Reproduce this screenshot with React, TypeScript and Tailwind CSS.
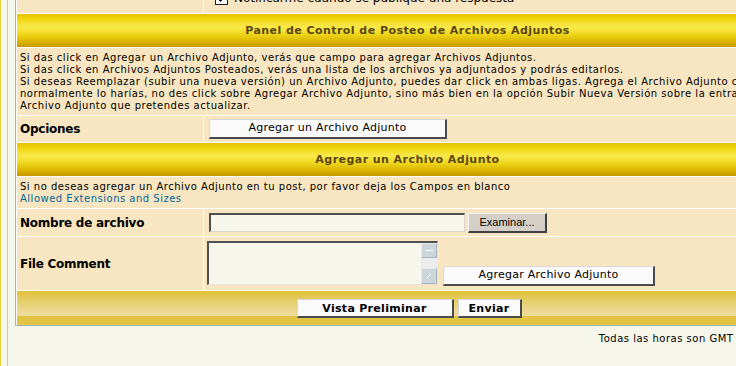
import React from 'react';

// fuente tipo Verdana para todo el panel
const verdana = "font-['DejaVu_Sans',Verdana,sans-serif]";

const headerBg =
  'bg-[linear-gradient(to_bottom,#e4c000_0%,#f0d40c_14%,#f8e84a_38%,#f6e236_50%,#ecd216_64%,#dcb602_82%,#c89800_100%)]';

const btnWhite =
  'bg-[#fafafa] border-t border-l border-t-[#d8d8d8] border-l-[#d8d8d8] border-r-2 border-b-2 border-r-[#4a4a4a] border-b-[#4a4a4a]';

const Header = ({ children }: { children: React.ReactNode }) => (
  <div
    className={`h-[33px] flex items-center justify-center pt-[2px] ${headerBg} text-[11px] font-bold text-[#5a4612] tracking-[0.45px]`}
  >
    {children}
  </div>
);

const Label = ({ children }: { children: React.ReactNode }) => (
  <div className="bg-[#f7e6c1] flex items-center pl-[3px] text-[12px] font-bold tracking-[-0.25px] text-black">
    {children}
  </div>
);

export default function App() {
  return (
    <div className={`w-[736px] h-[366px] overflow-hidden bg-[#f6f6ea] ${verdana}`}>
      <div className="h-full flex border-l border-[#f0cf3c]">
        <div className="w-[6px] shrink-0" />
        <div className="h-full flex border-l border-[#f0cf3c] pl-[7px]">
          <div className="w-[785px] shrink-0">
            {/* tabla principal */}
            <div className="border border-[#a3b3bf] border-t-0 bg-white flex flex-col gap-px pl-px pr-px pb-0">
              {/* fila superior (cortada) */}
              <div className="grid grid-cols-[186px_1fr] gap-px h-[13px] overflow-hidden">
                <div className="bg-[#f7e6c1]" />
                <div className="bg-[#f7e6c1] pl-[11px] flex items-start gap-[6px] -mt-[8px]">
                  <span className="w-[13px] h-[13px] shrink-0 bg-white border border-[#1c1c1c] flex items-center justify-center">
                    <svg width="9" height="9" viewBox="0 0 9 9">
                      <path d="M1 4 L3.5 6.5 L8 1.5" stroke="#000" strokeWidth="2" fill="none" />
                    </svg>
                  </span>
                  <span className="text-[12px] leading-[13px] text-black whitespace-nowrap">
                    Notificarme cuando se publique una respuesta
                  </span>
                </div>
              </div>

              <Header>Panel de Control de Posteo de Archivos Adjuntos</Header>

              <div className="bg-[#f7e6c1] h-[67px] pl-[3px] pt-[4px] text-[10px] leading-[12px] tracking-[0.52px] text-black whitespace-nowrap overflow-hidden">
                <div>Si das click en Agregar un Archivo Adjunto, verás que campo para agregar Archivos Adjuntos.</div>
                <div>Si das click en Archivos Adjuntos Posteados, verás una lista de los archivos ya adjuntados y podrás editarlos.</div>
                <div>
                  Si deseas Reemplazar (subir una nueva versión) un Archivo Adjunto, puedes dar click en ambas ligas. Agrega el Archivo Adjunto como
                </div>
                <div>
                  normalmente lo harías, no des click sobre Agregar Archivo Adjunto, sino más bien en la opción Subir Nueva Versión sobre la entrada del
                </div>
                <div>Archivo Adjunto que pretendes actualizar.</div>
              </div>

              <div className="grid grid-cols-[186px_1fr] gap-px h-[26px]">
                <Label>Opciones</Label>
                <div className="bg-[#f7e6c1] flex items-center pl-[5px]">
                  <button className={`w-[238px] h-[20px] ${btnWhite} text-[11px] tracking-[0.25px] text-black`}>
                    Agregar un Archivo Adjunto
                  </button>
                </div>
              </div>

              <Header>Agregar un Archivo Adjunto</Header>

              <div className="bg-[#f7e6c1] h-[31px] pl-[3px] pt-[4px] text-[10px] leading-[12px] tracking-[0.5px] whitespace-nowrap">
                <div className="text-black">
                  Si no deseas agregar un Archivo Adjunto en tu post, por favor deja los Campos en blanco
                </div>
                <a className="text-[#006699]">Allowed Extensions and Sizes</a>
              </div>

              <div className="grid grid-cols-[186px_1fr] gap-px h-[27px]">
                <Label>Nombre de archivo</Label>
                <div className="bg-[#f7e6c1] flex items-start pl-[5px] pt-[4px] gap-[3px]">
                  <div className="w-[256px] h-[19px] bg-[#f6f6ea] border-t-2 border-l-2 border-t-[#505050] border-l-[#505050] border-r border-b border-r-[#d8d4c8] border-b-[#d8d4c8]" />
                  <button className="w-[79px] h-[20px] bg-[#d4d0c8] border-t border-l border-t-[#f4f4f0] border-l-[#f4f4f0] border-r-2 border-b-2 border-r-[#404040] border-b-[#404040] text-[11px] leading-none text-black font-['Liberation_Sans',Arial,sans-serif]">
                    Examinar...
                  </button>
                </div>
              </div>

              <div className="grid grid-cols-[186px_1fr] gap-px h-[53px]">
                <Label>File Comment</Label>
                <div className="bg-[#f7e6c1] flex items-start pl-[3px] pt-[4px] gap-[5px]">
                  <div className="w-[231px] h-[44px] bg-[#f6f6ea] border-t-2 border-l-2 border-t-[#505050] border-l-[#505050] border-r border-b border-r-[#e8e4d8] border-b-[#e8e4d8] flex justify-end">
                    <div className="w-[16px] h-full flex flex-col bg-[#ececec]">
                      <div className="h-[15px] bg-[#cdd5dc] border border-[#e6ecf0] border-r-[#a8b4c0] border-b-[#a8b4c0] flex items-center justify-center">
                        <div className="w-[7px] h-px bg-white" />
                      </div>
                      <div className="flex-1" />
                      <div className="h-[16px] bg-[#cdd5dc] border border-[#e6ecf0] border-r-[#a8b4c0] border-b-[#a8b4c0] flex items-center justify-center">
                        <svg width="6" height="6" viewBox="0 0 6 6">
                          <path d="M1 5 L5 1" stroke="#fff" strokeWidth="1" />
                        </svg>
                      </div>
                    </div>
                  </div>
                  <button className={`mt-[25px] w-[212px] h-[20px] ${btnWhite} text-[11px] tracking-[0.25px] text-black`}>
                    Agregar Archivo Adjunto
                  </button>
                </div>
              </div>

              <div className="h-[34px] bg-[linear-gradient(to_bottom,#e0c03a_0%,#e8d27a_40%,#eedc9e_73%,#e2c444_74%,#e2c444_100%)] flex justify-center items-start pt-[8px] gap-[4px] pl-[3px]">
                <button className={`w-[157px] h-[19px] ${btnWhite} text-[11px] font-bold leading-none tracking-[0.3px] text-black`}>
                  Vista Preliminar
                </button>
                <button className={`w-[64px] h-[19px] ${btnWhite} text-[11px] font-bold leading-none tracking-[0.3px] text-black`}>
                  Enviar
                </button>
              </div>
            </div>

            <div className="pt-[7px] pr-[13px] text-right text-[10px] leading-[12px] tracking-[0.5px] text-black whitespace-nowrap">
              Todas las horas son GMT - 5 Horas
            </div>
          </div>
        </div>
      </div>
    </div>
  );
}
